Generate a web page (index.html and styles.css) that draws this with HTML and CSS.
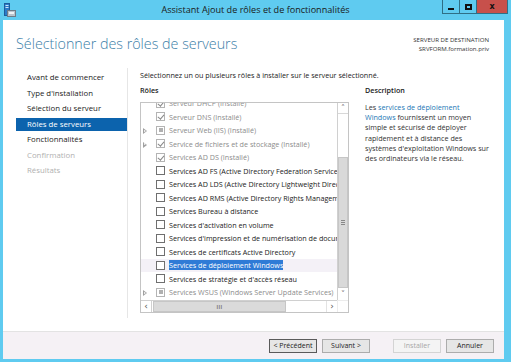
FILE: index.html
```html
<!DOCTYPE html>
<html lang="fr">
<head>
<meta charset="utf-8">
<title>Assistant Ajout de rôles et de fonctionnalités</title>
<link rel="stylesheet" href="styles.css">
</head>
<body>
<div class="window">
  <div class="titlebar">
    <svg class="app-icon" width="12" height="14" viewBox="0 0 12 14">
      <rect x="0.5" y="0.5" width="5" height="12" fill="#2b7bc9" stroke="#1d5d9c"/>
      <rect x="1.5" y="2" width="3" height="1" fill="#cfe6fa"/>
      <rect x="1.5" y="4" width="3" height="1" fill="#cfe6fa"/>
      <rect x="3.5" y="7.5" width="8" height="6" fill="#b9c3cc" stroke="#6d7a86"/>
      <rect x="5" y="9" width="5" height="2" fill="#eef2f5"/>
    </svg>
    <div class="title">Assistant Ajout de rôles et de fonctionnalités</div>
    <div class="controls">
      <div class="ctl min"><span class="min-glyph"></span></div>
      <div class="ctl max"><span class="max-glyph"></span></div>
      <div class="ctl close">x</div>
    </div>
  </div>
  <div class="client">
    <div class="header">
      <h1 class="heading">Sélectionner des rôles de serveurs</h1>
      <div class="dest">
        <div>SERVEUR DE DESTINATION</div>
        <div>SRVFORM.formation.priv</div>
      </div>
    </div>
    <div class="body">
      <ul class="nav">
        <li>Avant de commencer</li>
        <li>Type d'installation</li>
        <li>Sélection du serveur</li>
        <li class="active">Rôles de serveurs</li>
        <li>Fonctionnalités</li>
        <li class="disabled">Confirmation</li>
        <li class="disabled">Résultats</li>
      </ul>
      <div class="main">
        <p class="intro">Sélectionnez un ou plusieurs rôles à installer sur le serveur sélectionné.</p>
        <div class="columns">
          <div class="roles">
            <div class="label">Rôles</div>
            <div class="listbox">
              <div class="viewport">
                <div class="rows">
                  <div class="row installed"><span class="exp"></span><span class="cb checked"></span><span class="txt">Serveur DHCP (Installé)</span></div>
                  <div class="row installed"><span class="exp"></span><span class="cb checked"></span><span class="txt">Serveur DNS (Installé)</span></div>
                  <div class="row installed"><span class="exp arrow"></span><span class="cb partial"></span><span class="txt">Serveur Web (IIS) (Installé)</span></div>
                  <div class="row installed"><span class="exp arrow"></span><span class="cb checked"></span><span class="txt">Service de fichiers et de stockage (Installé)</span></div>
                  <div class="row installed"><span class="exp"></span><span class="cb checked"></span><span class="txt">Services AD DS (Installé)</span></div>
                  <div class="row"><span class="exp"></span><span class="cb"></span><span class="txt">Services AD FS (Active Directory Federation Services)</span></div>
                  <div class="row"><span class="exp"></span><span class="cb"></span><span class="txt">Services AD LDS (Active Directory Lightweight Directory Services)</span></div>
                  <div class="row"><span class="exp"></span><span class="cb"></span><span class="txt">Services AD RMS (Active Directory Rights Management Services)</span></div>
                  <div class="row"><span class="exp"></span><span class="cb"></span><span class="txt">Services Bureau à distance</span></div>
                  <div class="row"><span class="exp"></span><span class="cb"></span><span class="txt">Services d'activation en volume</span></div>
                  <div class="row"><span class="exp"></span><span class="cb"></span><span class="txt">Services d'impression et de numérisation de document</span></div>
                  <div class="row"><span class="exp"></span><span class="cb"></span><span class="txt">Services de certificats Active Directory</span></div>
                  <div class="row selected"><span class="exp"></span><span class="cb"></span><span class="txt">Services de déploiement Windows</span></div>
                  <div class="row"><span class="exp"></span><span class="cb"></span><span class="txt">Services de stratégie et d'accès réseau</span></div>
                  <div class="row installed"><span class="exp arrow"></span><span class="cb partial"></span><span class="txt">Services WSUS (Windows Server Update Services)</span></div>
                </div>
              </div>
              <div class="vscroll">
                <div class="sbtn up">&#x2C4;</div>
                <div class="vtrack"><div class="vthumb"><span class="grip-v"></span></div></div>
                <div class="sbtn down">&#x2C5;</div>
              </div>
              <div class="hscroll">
                <div class="hbtn">&lsaquo;</div>
                <div class="htrack"><div class="hthumb"><span class="grip-h">III</span></div></div>
                <div class="hbtn">&rsaquo;</div>
              </div>
              <div class="corner"></div>
            </div>
          </div>
          <div class="desc">
            <div class="label">Description</div>
            <p class="desc-text">Les <span class="link">services de déploiement<br>Windows</span> fournissent un moyen<br>simple et sécurisé de déployer<br>rapidement et à distance des<br>systèmes d'exploitation Windows sur<br>des ordinateurs via le réseau.</p>
          </div>
        </div>
      </div>
    </div>
    <div class="footer">
      <button class="btn default">&lt; Précédent</button>
      <button class="btn">Suivant &gt;</button>
      <button class="btn disabled install">Installer</button>
      <button class="btn">Annuler</button>
    </div>
  </div>
</div>
</body>
</html>
```

FILE: styles.css
```css
* { box-sizing: border-box; }
html, body { margin: 0; padding: 0; }
body {
  width: 511px;
  height: 362px;
  overflow: hidden;
  background: #5fcbf0;
  font-family: "Open Sans", "Noto Sans", sans-serif;
  color: #1e1e1e;
}
.window {
  width: 511px;
  height: 362px;
  display: flex;
  flex-direction: column;
  padding: 0 7px 3px 3px;
}
.titlebar {
  height: 20px;
  flex: none;
  position: relative;
  display: flex;
  align-items: center;
  margin-right: -7px;
  margin-left: -3px;
}
.app-icon { position: absolute; left: 4px; top: 3px; }
.title {
  flex: 1;
  text-align: center;
  font-size: 9.1px;
  color: #1a1a1a;
  margin-top: -1px;
}
.controls {
  position: absolute;
  right: 3px;
  top: 0;
  display: flex;
  height: 14px;
  border: 1px solid #2f6f86;
  border-top: none;
}
.ctl {
  height: 13px;
  display: flex;
  align-items: center;
  justify-content: center;
}
.min, .max { width: 17px; border-right: 1px solid #2f6f86; }
.min-glyph { width: 6px; height: 2px; background: #111; margin-top: 4px; }
.max-glyph { width: 7px; height: 6px; border: 2px solid #111; }
.close {
  width: 30px;
  background: #c7504b;
  font-family: "DejaVu Sans", sans-serif;
  font-weight: bold;
  font-size: 8px;
  color: #111;
  padding-bottom: 1px;
}
.client {
  flex: 1;
  background: #fff;
  display: flex;
  flex-direction: column;
}
.header {
  height: 48px;
  flex: none;
  display: flex;
  justify-content: space-between;
  padding: 14px 15px 0 13px;
}
.heading {
  margin: 0;
  font-size: 14.3px;
  font-weight: 300;
  color: #3b7ea8;
  line-height: 20px;
}
.dest {
  text-align: right;
  font-size: 6.1px;
  line-height: 9px;
  color: #333;
  padding-top: 1px;
}
.body {
  flex: 1;
  display: flex;
  padding-bottom: 13px;
  border-bottom: 1px solid #e3e3e3;
}
.nav {
  list-style: none;
  margin: 0;
  padding: 3px 0 0 13px;
  width: 125px;
  border-right: 1px solid #e6e6e6;
  font-size: 7.8px;
}
.nav li {
  height: 13px;
  line-height: 13px;
  margin-bottom: 2.5px;
  padding-left: 11px;
  color: #222;
  white-space: nowrap;
}
.nav li.active { background: #0c63ad; color: #fff; }
.nav li.disabled { color: #b0b0b0; }
.main {
  flex: 1;
  padding: 2px 0 0 12px;
  font-size: 7.2px;
}
.intro { margin: 0; height: 15px; line-height: 11px; color: #222; }
.columns { display: flex; gap: 16px; }
.label { font-weight: 600; height: 17px; line-height: 11px; color: #222; }
.roles { width: 209px; }
.listbox {
  height: 211px;
  border: 1px solid #c4c4c4;
  display: grid;
  grid-template-columns: 1fr 11px;
  grid-template-rows: 1fr 12px;
}
.viewport { overflow: hidden; }
.rows { margin-top: -6.5px; }
.row {
  height: 13.5px;
  display: flex;
  align-items: center;
  white-space: nowrap;
  color: #222;
}
.row.installed { color: #8c8c8c; }
.exp { width: 15px; flex: none; position: relative; height: 100%; }
.exp.arrow::before {
  content: "";
  position: absolute;
  left: 2px;
  top: 4.5px;
  border-left: 4px solid #a0a0a0;
  border-top: 3px solid transparent;
  border-bottom: 3px solid transparent;
}
.exp.arrow::after {
  content: "";
  position: absolute;
  left: 2.8px;
  top: 6px;
  border-left: 2px solid #fff;
  border-top: 1.5px solid transparent;
  border-bottom: 1.5px solid transparent;
}
.cb {
  width: 9px;
  height: 9px;
  flex: none;
  border: 1px solid #6f6f6f;
  background: #fff;
  margin-right: 4px;
  position: relative;
}
.installed .cb { border-color: #b4b4b4; }
.cb.checked::after {
  content: "";
  position: absolute;
  left: 2px;
  top: 0;
  width: 2.5px;
  height: 5px;
  border-right: 1px solid #888;
  border-bottom: 1px solid #888;
  transform: rotate(40deg);
}
.cb.partial::after {
  content: "";
  position: absolute;
  left: 1.5px;
  top: 1.5px;
  width: 4px;
  height: 4px;
  background: #b0b0b0;
}
.row.selected { background: #f4f1f7; }
.row.selected .txt { background: #2f7bd6; color: #fff; }
.vscroll {
  border-left: 1px solid #d0d0d0;
  display: flex;
  flex-direction: column;
  background: #fff;
}
.sbtn {
  height: 11px;
  display: flex;
  align-items: center;
  justify-content: center;
  font-size: 8px;
  color: #777;
  font-family: "DejaVu Sans", sans-serif;
}
.sbtn.up { border-bottom: 1px solid #d8d8d8; }
.vtrack { flex: 1; display: flex; flex-direction: column; justify-content: flex-end; padding-bottom: 1px; }
.vthumb {
  height: 131px;
  background: #d9d9d9;
  border: 1px solid #c6c6c6;
  display: flex;
  align-items: center;
  justify-content: center;
}
.grip-v { width: 4px; height: 5px; border-top: 1px solid #888; border-bottom: 1px solid #888; position: relative; }
.grip-v::after { content: ""; position: absolute; left: 0; right: 0; top: 1px; border-top: 1px solid #888; }
.hscroll {
  border-top: 1px solid #d0d0d0;
  display: flex;
  background: #fff;
}
.hbtn {
  width: 11px;
  display: flex;
  align-items: center;
  justify-content: center;
  font-size: 9px;
  line-height: 1;
  color: #555;
  font-family: "DejaVu Sans", sans-serif;
  border-right: 1px solid #d0d0d0;
}
.hbtn:last-child { border-right: none; border-left: 1px solid #e3e3e3; margin-left: auto; }
.htrack { flex: 1; padding: 0 40px 0 1px; display: flex; }
.hthumb {
  flex: 1;
  background: #dadada;
  border: 1px solid #c6c6c6;
  display: flex;
  align-items: center;
  justify-content: center;
}
.grip-h { font-size: 5px; font-weight: bold; color: #777; letter-spacing: 0.3px; }
.corner { background: #fff; border-top: 1px solid #ececec; border-left: 1px solid #ececec; }
.desc { width: 130px; }
.desc-text { margin: 0; line-height: 10.2px; color: #333; white-space: nowrap; }
.link { color: #1d77b5; }
.footer {
  height: 27px;
  flex: none;
  background: #f5f1f5;
  display: flex;
  align-items: center;
  justify-content: flex-end;
  padding: 0 10px 0 0;
}
.btn {
  width: 48px;
  height: 14px;
  margin-left: 5px;
  padding: 0;
  font-family: "Open Sans", "Noto Sans", sans-serif;
  font-size: 7px;
  color: #222;
  background: #e6e6e6;
  border: 1px solid #acacac;
}
.btn.default { border-color: #5a5a5a; box-shadow: inset 0 0 0 1px #e6e6e6; }
.btn.install { margin-left: 23px; }
.btn.disabled { background: #f4f4f4; border-color: #d4d4d4; color: #a6a6a6; }
```
